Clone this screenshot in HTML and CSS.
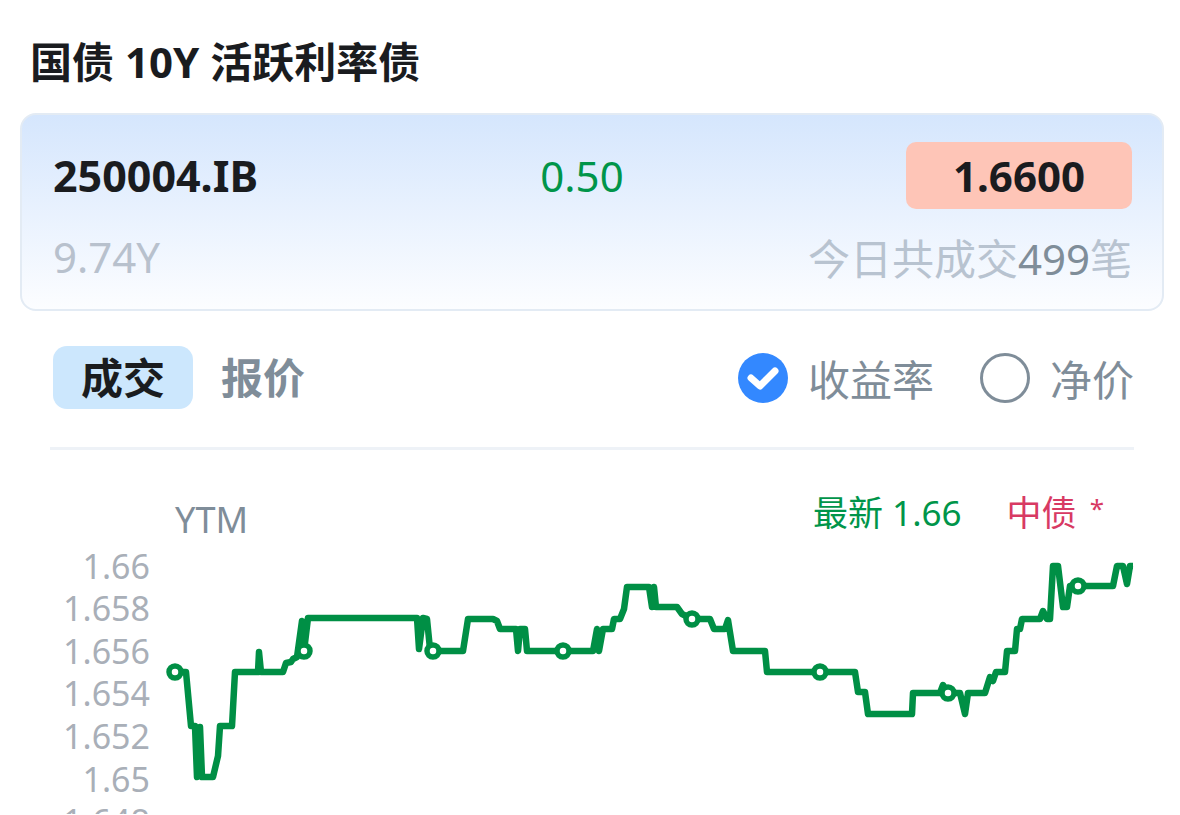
FILE: index.html
```html
<!DOCTYPE html>
<html lang="zh-CN">
<head>
  <meta charset="UTF-8" />
  <meta name="viewport" content="width=device-width, initial-scale=1" />
  <title>国债 10Y 活跃利率债</title>
  <link rel="stylesheet" href="styles.css">
</head>
<body>

<header class="title">国债 10Y 活跃利率债</header>

<div class="card">
  <div class="card-row">
    <span class="code">250004.IB</span>
    <span class="change">0.50</span>
    <span class="price">1.6600</span>
  </div>
  <div class="card-row sub">
    <span class="term">9.74Y</span>
    <span class="deals">今日共成交<b>499</b>笔</span>
  </div>
</div>

<div class="panel">
  <div class="tabs">
    <div class="tab-group">
      <span class="tab active">成交</span>
      <span class="tab">报价</span>
    </div>
    <div class="radio-group">
      <label class="radio checked">
        <svg class="dot" viewBox="0 0 50 50" width="50" height="50">
          <circle cx="25" cy="25" r="25" fill="#3388ff"/>
          <path d="M13 25 L22 33 L37 18" fill="none" stroke="#fff" stroke-width="7" stroke-linecap="round" stroke-linejoin="round"/>
        </svg>
        收益率
      </label>
      <label class="radio">
        <svg class="dot" viewBox="0 0 50 50" width="50" height="50">
          <circle cx="25" cy="25" r="23.5" fill="none" stroke="#7f8d99" stroke-width="3"/>
        </svg>
        净价
      </label>
    </div>
  </div>

  <div class="chart-head">
    <span class="axis-name">YTM</span>
    <div class="legend">
      <span class="latest">最新 1.66</span>
      <span class="cb">中债 <i class="star">*</i></span>
    </div>
  </div>
</div>

<svg class="chart" viewBox="0 540 1180 275" width="1180" height="275">
  <g class="ylabels">
    <text x="150" y="567">1.66</text>
    <text x="150" y="609">1.658</text>
    <text x="150" y="652">1.656</text>
    <text x="150" y="694">1.654</text>
    <text x="150" y="737">1.652</text>
    <text x="150" y="780">1.65</text>
    <text x="150" y="822">1.648</text>
  </g>
  <polyline class="line" points="175,673 186,673 191,727 195,727 197,778 200,728 202,778 213,778 218,757 220,727 232,727 235,673 258,673 259,653 261,673 283,673 286,664 291,663 293,660 297,658 302,622 304,652 308,619 417,619 419,650 423,619 427,620 430,650 433,652 463,652 468,620 493,620 497,622 500,630 507,630 516,630 518,652 520,630 525,630 527,652 563,652 593,652 597,630 599,652 603,630 612,630 614,620 620,620 624,610 627,588 649,588 652,608 654,588 656,608 677,608 682,615 692,620 710,620 714,630 725,630 728,621 733,652 765,652 767,673 820,673 855,673 858,693 865,693 868,715 912,715 913,694 940,694 943,686 948,694 960,694 965,715 968,694 985,694 990,678 993,682 996,673 1005,673 1007,652 1015,652 1017,630 1020,630 1022,620 1040,620 1043,612 1047,620 1050,620 1053,567 1058,567 1063,608 1067,608 1070,587 1078,587 1113,587 1117,567 1123,567 1127,585 1130,567 1133,567"/>
  <g class="marks">
    <circle cx="175" cy="673" r="6"/>
    <circle cx="304" cy="652" r="6"/>
    <circle cx="433" cy="652" r="6"/>
    <circle cx="563" cy="652" r="6"/>
    <circle cx="692" cy="620" r="6"/>
    <circle cx="820" cy="673" r="6"/>
    <circle cx="948" cy="694" r="6"/>
    <circle cx="1078" cy="587" r="6"/>
  </g>
</svg>

</body>
</html>
```

FILE: styles.css
```css
body {
  font-family: "Noto Sans", "Noto Sans CJK SC", sans-serif;
  background: #fff;
  color: #1a1c1f;
  margin: 0;
  padding: 0 16px 0 20px;
  overflow: hidden;
}
.title {
  font-size: 42px;
  font-weight: bold;
  line-height: 50px;
  padding: 37px 0 0 10px;
}
.card {
  margin-top: 26px;
  border: 2px solid #e3ebf4;
  border-radius: 16px;
  background: linear-gradient(180deg, #d5e6fd 0%, #fcfdff 100%);
  padding: 27px 30px 24px 31px;
}
.card-row {
  display: flex;
  justify-content: space-between;
  align-items: center;
  font-size: 42px;
  height: 67px;
}
.card-row.sub {
  margin-top: 18px;
  height: 58px;
}
.code { font-weight: bold; font-size: 43px; }
.change { color: #00954a; }
.price {
  background: #fec5b7;
  border-radius: 10px;
  width: 226px;
  height: 67px;
  line-height: 67px;
  text-align: center;
  font-weight: bold;
}
.term { color: #b8c1cd; }
.deals { color: #b8c3d0; }
.deals b { font-weight: normal; color: #7f8d99; }

.panel {
  margin: 0 30px 0 30px;
}
.tabs {
  display: flex;
  justify-content: space-between;
  align-items: center;
  margin-top: 35px;
  padding-bottom: 38px;
  border-bottom: 3px solid #eef2f7;
}
.tab-group { display: flex; gap: 28px; align-items: center; padding-left: 3px; }
.tab {
  font-size: 42px;
  font-weight: bold;
  color: #7f8d99;
  line-height: 63px;
}
.tab.active {
  background: #cce7fd;
  color: #1a1c1f;
  border-radius: 14px;
  padding: 0 28px;
}
.radio-group { display: flex; align-items: center; gap: 46px; }
.radio {
  display: flex;
  align-items: center;
  gap: 20px;
  font-size: 42px;
  color: #7f8d99;
}
.dot { display: block; }

.chart-head {
  display: flex;
  justify-content: space-between;
  align-items: flex-start;
  height: 89px;
  padding-left: 125px;
}
.axis-name {
  margin-top: 48px;
  font-size: 36px;
  line-height: 44px;
  color: #7f8d99;
}
.legend {
  display: flex;
  gap: 45px;
  margin-top: 41px;
  margin-right: 30px;
  font-size: 35px;
  line-height: 44px;
}
.latest { color: #00954a; }
.cb { color: #d83a63; }
.star {
  display: inline-block;
  font-style: normal;
  font-size: 26px;
  margin-left: 4px;
  transform: translateY(-8px);
}

.chart {
  display: block;
  margin-left: -20px;
}
.ylabels text {
  font-size: 34px;
  fill: #a9afb8;
  text-anchor: end;
  dominant-baseline: central;
}
.line {
  fill: none;
  stroke: #008f45;
  stroke-width: 6.5;
  stroke-linejoin: round;
}
.marks circle {
  fill: #fff;
  stroke: #008f45;
  stroke-width: 5.5;
}
```
